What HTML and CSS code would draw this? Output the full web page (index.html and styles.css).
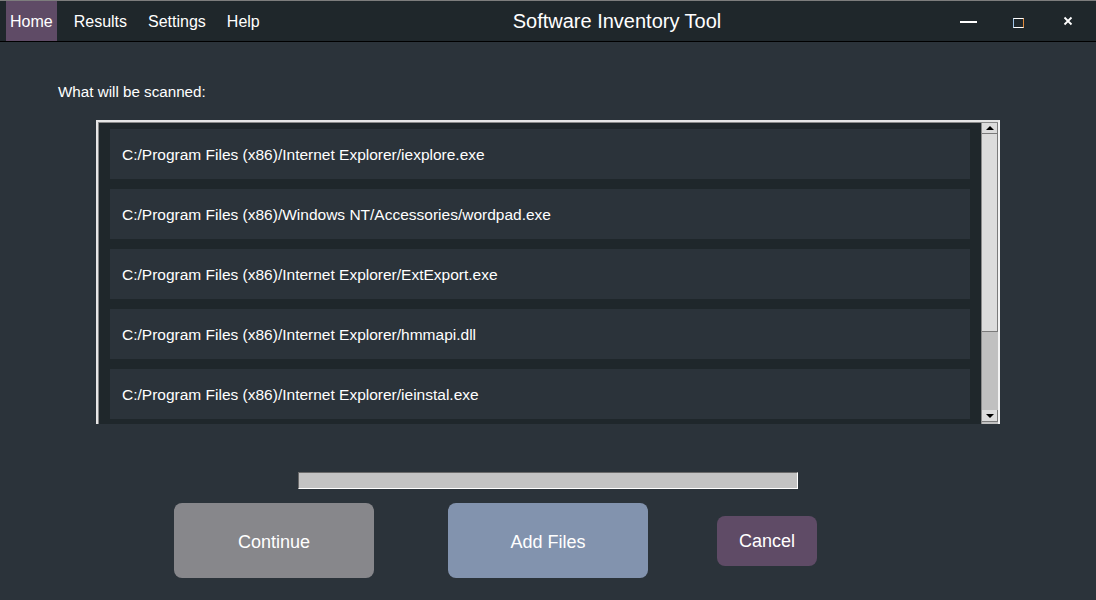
FILE: index.html
```html
<!DOCTYPE html>
<html>
<head>
<meta charset="utf-8">
<title>Software Inventory Tool</title>
<link rel="stylesheet" href="styles.css">
</head>
<body>
<header class="titlebar">
  <nav class="menu">
    <span class="menu-item active">Home</span>
    <span class="menu-item">Results</span>
    <span class="menu-item">Settings</span>
    <span class="menu-item">Help</span>
  </nav>
  <div class="title">Software Inventory Tool</div>
  <div class="win-controls">
    <span class="wc wc-min"><span class="min-line"></span></span>
    <span class="wc wc-max"><span class="max-box"></span></span>
    <span class="wc wc-close">
      <svg width="10" height="10" viewBox="0 0 10 10"><path d="M1.5 1.5 L8.5 8.5 M8.5 1.5 L1.5 8.5" stroke="#fff" stroke-width="1.8" fill="none"/></svg>
    </span>
  </div>
</header>
<main class="content">
  <div class="label">What will be scanned:</div>
  <div class="listbox">
    <div class="list">
      <div class="item">C:/Program Files (x86)/Internet Explorer/iexplore.exe</div>
      <div class="item">C:/Program Files (x86)/Windows NT/Accessories/wordpad.exe</div>
      <div class="item">C:/Program Files (x86)/Internet Explorer/ExtExport.exe</div>
      <div class="item">C:/Program Files (x86)/Internet Explorer/hmmapi.dll</div>
      <div class="item">C:/Program Files (x86)/Internet Explorer/ieinstal.exe</div>
    </div>
    <div class="scrollbar">
      <div class="sb-btn"><span class="tri-up"></span></div>
      <div class="sb-thumb"></div>
      <div class="sb-track"></div>
      <div class="sb-btn"><span class="tri-down"></span></div>
    </div>
  </div>
  <div class="progress"></div>
  <div class="buttons">
    <button class="btn btn-continue">Continue</button>
    <button class="btn btn-add">Add Files</button>
    <button class="btn btn-cancel">Cancel</button>
  </div>
</main>
</body>
</html>
```

FILE: styles.css
```css
* { box-sizing: border-box; }
html, body {
  margin: 0;
  padding: 0;
  width: 1096px;
  height: 600px;
  overflow: hidden;
  background: #2b333a;
  font-family: "Liberation Sans", Arial, sans-serif;
  color: #ffffff;
}
.titlebar {
  height: 42px;
  background: #1f272b;
  border-top: 1px solid #7d7d7d;
  border-bottom: 1px solid #000000;
  display: flex;
  align-items: stretch;
}
.menu {
  display: flex;
  align-items: stretch;
  padding-left: 6px;
  gap: 13px;
  width: 280px;
}
.menu-item {
  display: flex;
  align-items: center;
  padding: 1px 4px 0 4px;
  font-size: 16px;
  color: #ffffff;
}
.menu-item.active {
  background: #5f4b66;
}
.title {
  flex: 1;
  display: flex;
  align-items: center;
  justify-content: center;
  font-size: 20px;
  padding-left: 58px;
  padding-top: 1px;
}
.win-controls {
  display: flex;
  align-items: center;
  width: 200px;
  padding-left: 47px;
}
.wc {
  display: flex;
  align-items: center;
  justify-content: center;
  width: 50px;
  height: 40px;
}
.min-line {
  display: block;
  width: 17px;
  height: 2px;
  background: #ffffff;
  margin-top: 2px;
}
.max-box {
  display: block;
  width: 11px;
  height: 10px;
  border: 1.5px solid #ffffff;
  border-right-color: #e08a3a;
  border-left-color: #9ec4e8;
  margin-top: 3px;
}
.wc-close svg { display: block; margin-top: 0px; }
.content {
  padding: 41px 0 0 58px;
}
.label {
  font-size: 15.2px;
  line-height: 18px;
  height: 18px;
}
.listbox {
  margin: 19px 0 0 38px;
  width: 904px;
  height: 304px;
  display: flex;
  background: #1f272b;
  border-top: 2px solid #e6e6e6;
  border-left: 2px solid #e6e6e6;
  border-right: 2px solid #f2f2f2;
  overflow: hidden;
  box-shadow: inset 1px 1px 0 #8a8a8a;
}
.list {
  flex: 1;
  padding: 7px 11px 0 12px;
  display: flex;
  flex-direction: column;
  gap: 10px;
}
.item {
  height: 50px;
  flex: none;
  background: #2b333a;
  display: flex;
  align-items: center;
  padding: 2px 0 0 12px;
  font-size: 15.5px;
}
.scrollbar {
  width: 17px;
  margin-top: 1px;
  display: flex;
  flex-direction: column;
  border-left: 1px solid #8a8a8a;
  background: #c0c0c0;
}
.sb-btn {
  height: 11px;
  flex: none;
  background: #dcdcdc;
  border-right: 1px solid #7a7a7a;
  border-bottom: 1px solid #7a7a7a;
  display: flex;
  align-items: center;
  justify-content: center;
}
.sb-btn:last-child {
  margin-bottom: 2px;
  height: 12px;
}
.tri-up {
  width: 0; height: 0;
  border-left: 4px solid transparent;
  border-right: 4px solid transparent;
  border-bottom: 4px solid #000;
}
.tri-down {
  width: 0; height: 0;
  border-left: 4px solid transparent;
  border-right: 4px solid transparent;
  border-top: 4px solid #000;
}
.sb-thumb {
  height: 198px;
  flex: none;
  background: #dcdcdc;
  border-right: 1px solid #7a7a7a;
  border-bottom: 1px solid #7a7a7a;
}
.sb-track {
  flex: 1;
  background: #c0c0c0;
}
.progress {
  margin: 48px 0 0 240px;
  width: 500px;
  height: 17px;
  background: #c3c3c3;
  border-top: 1px solid #6a6a6a;
  border-left: 1px solid #6a6a6a;
  border-bottom: 1px solid #ffffff;
  border-right: 1px solid #ffffff;
}
.buttons {
  margin: 14px 0 0 116px;
  display: flex;
  align-items: center;
}
.btn {
  border: none;
  color: #ffffff;
  font-family: "Liberation Sans", Arial, sans-serif;
  font-size: 18px;
  border-radius: 8px;
  padding: 3px 0 0 0;
}
.btn-continue {
  width: 200px;
  height: 75px;
  background: #87878b;
}
.btn-add {
  width: 200px;
  height: 75px;
  background: #8293ae;
  margin-left: 74px;
}
.btn-cancel {
  width: 100px;
  height: 50px;
  background: #5f4b66;
  margin-left: 69px;
  padding-top: 1px;
}
```
